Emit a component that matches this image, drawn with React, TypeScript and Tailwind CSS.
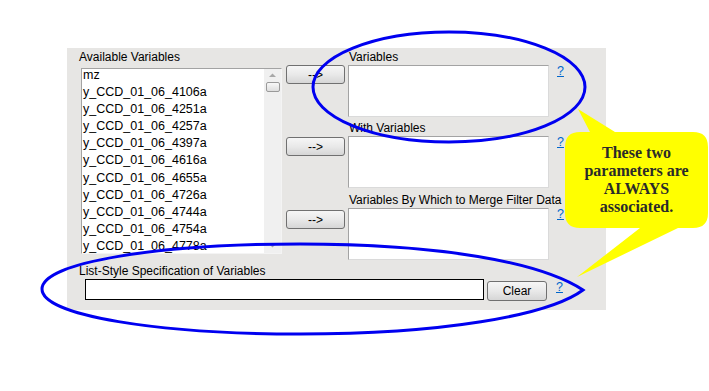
const listItems = [
  "mz",
  "y_CCD_01_06_4106a",
  "y_CCD_01_06_4251a",
  "y_CCD_01_06_4257a",
  "y_CCD_01_06_4397a",
  "y_CCD_01_06_4616a",
  "y_CCD_01_06_4655a",
  "y_CCD_01_06_4726a",
  "y_CCD_01_06_4744a",
  "y_CCD_01_06_4754a",
  "y_CCD_01_06_4778a",
];

function WinButton({ label, className = "" }: { label: string; className?: string }) {
  return (
    <button
      className={`flex items-center justify-center rounded-[3px] border border-[#707070] bg-linear-to-b from-[#f6f6f6] via-[#e9e9e9] to-[#d6d6d6] text-[12px] leading-none text-black ${className}`}
    >
      {label}
    </button>
  );
}

function Help({ className = "" }: { className?: string }) {
  return (
    <a href="#" className={`text-[12.5px] leading-[14px] text-[#0066cc] underline ${className}`}>
      ?
    </a>
  );
}

function TargetGroup({
  label,
  labelGap,
  buttonGap,
}: {
  label: string;
  labelGap: string;
  buttonGap: string;
}) {
  return (
    <div className={labelGap}>
      <div className="h-[16px] whitespace-nowrap pl-[63px] leading-[16px]">{label}</div>
      <div className="flex items-start">
        <WinButton label="-->" className={`h-[19px] w-[59px] ${buttonGap}`} />
        <div className="ml-[3px] h-[52px] w-[201px] border border-[#a3a3a3] border-r-[#dadada] border-b-[#dadada] bg-white" />
        <Help className="ml-[8px] -mt-[1px]" />
      </div>
    </div>
  );
}

export default function App() {
  return (
    <div className="relative h-[391px] w-[709px] overflow-hidden bg-white font-['Liberation_Sans',Arial,sans-serif] text-black">
      <div className="pl-[67px] pt-[48px]">
        <div className="flex h-[262px] w-[539px] flex-col bg-[#e7e6e4] pl-[12px] pt-[1px] text-[12px]">
          {/* top: source list + three targets */}
          <div className="flex">
            <div className="w-[207px]">
              <div className="h-[16px] leading-[16px]">Available Variables</div>
              <div className="ml-[2px] mt-[3px] flex h-[186px] w-[201px] border border-[#a3a3a3] border-r-[#f4f4f4] border-b-[#f4f4f4] bg-white">
                <div className="flex-1 overflow-hidden pl-[1px]">
                  <div className="-mt-[2px]">
                    {listItems.map((item) => (
                      <div key={item} className="h-[17.1px] whitespace-nowrap text-[12.5px] leading-[17px]">
                        {item}
                      </div>
                    ))}
                  </div>
                </div>
                <div className="flex w-[17px] flex-col items-center bg-[#f0f0f0]">
                  <svg width="9" height="6" viewBox="0 0 9 6" className="mt-[3px]">
                    <path d="M1 5 L4.5 1.5 L8 5 Z" fill="#a8a8a8" />
                  </svg>
                  <div className="mt-[4px] h-[10px] w-[14px] rounded-[2px] border border-[#9a9a9a] bg-linear-to-b from-[#f8f8f8] to-[#dedede]" />
                  <div className="flex-1" />
                  <svg width="9" height="6" viewBox="0 0 9 6" className="mb-[4px]">
                    <path d="M1 1 L4.5 4.5 L8 1 Z" fill="#a8a8a8" />
                  </svg>
                </div>
              </div>
            </div>
            <div className="flex flex-col">
              <TargetGroup label="Variables" labelGap="" buttonGap="" />
              <TargetGroup label="With Variables" labelGap="mt-[3px]" buttonGap="mt-[1px]" />
              <TargetGroup label="Variables By Which to Merge Filter Data" labelGap="mt-[4px]" buttonGap="mt-[2px]" />
            </div>
          </div>

          {/* bottom: list-style spec */}
          <div className="mt-[3px] h-[16px] leading-[16px]">List-Style Specification of Variables</div>
          <div className="flex items-start">
            <input className="ml-[6px] h-[21px] w-[399px] border border-black bg-white px-1 text-[12px] outline-none" />
            <WinButton label="Clear" className="ml-[3px] mt-[2px] h-[20px] w-[60px]" />
            <Help className="ml-[9px] mt-[1px]" />
          </div>
        </div>
      </div>

      {/* annotations drawn over the form */}
      <svg className="pointer-events-none absolute left-0 top-0" width="709" height="391" viewBox="0 0 709 391">
        <path
          d="M580 132 L590 132 L578 109 L615 132 L693 132 Q708 132 708 147 L708 213 Q708 228 693 228 L678 228 L577 277 L640 228 L580 228 Q565 228 565 213 L565 147 Q565 132 580 132 Z"
          fill="#ffff00"
        />
        <ellipse cx="449" cy="87" rx="136" ry="55" fill="none" stroke="#0000f0" strokeWidth="3" />
        <path
          d="M42 289 C42 262 160 244 300 244 C440 244 540 262 583 290 C548 316 440 334 300 334 C160 334 42 316 42 289 Z"
          fill="none"
          stroke="#0000f0"
          strokeWidth="3"
        />
      </svg>
      <div className="pointer-events-none absolute left-[565px] top-[144px] w-[143px] text-center font-['Liberation_Serif','Times_New_Roman',serif] text-[16px] font-bold leading-[18px] text-[#2a2a2a]">
        These two
        <br />
        parameters are
        <br />
        ALWAYS
        <br />
        associated.
      </div>
    </div>
  );
}
